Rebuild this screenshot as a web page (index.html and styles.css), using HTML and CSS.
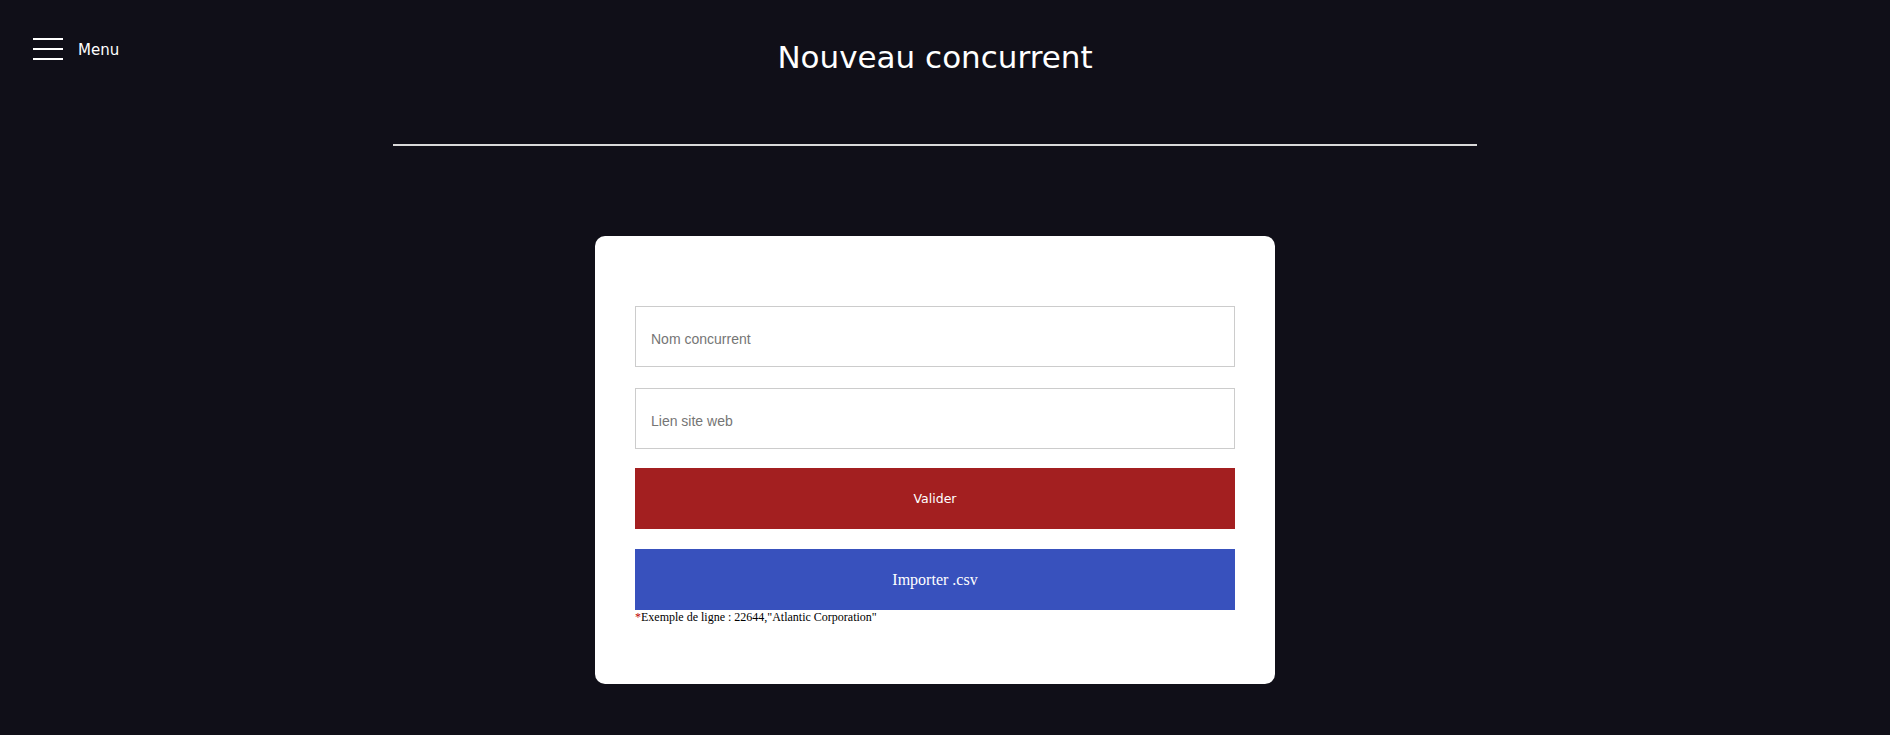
FILE: index.html
```html
<!DOCTYPE html>
<html lang="fr">
<head>
<meta charset="utf-8">
<title>Nouveau concurrent</title>
<link rel="stylesheet" href="styles.css">
</head>
<body>
<div class="page">
  <header class="topbar">
    <button class="menu-toggle" type="button">
      <span class="burger"><i></i><i></i><i></i></span>
      <span class="menu-label">Menu</span>
    </button>
    <h1 class="title">Nouveau concurrent</h1>
    <div class="spacer"></div>
  </header>
  <hr class="divider">
  <main class="card">
    <form class="form">
      <input class="field" type="text" placeholder="Nom concurrent">
      <input class="field" type="text" placeholder="Lien site web">
      <button class="btn btn-valider" type="button">Valider</button>
      <div class="import">
        <button class="btn btn-import" type="button">Importer .csv</button>
        <p class="hint"><span class="star">*</span>Exemple de ligne : 22644,"Atlantic Corporation"</p>
      </div>
    </form>
  </main>
</div>
</body>
</html>
```
FILE: styles.css
```css
html, body {
  margin: 0;
  padding: 0;
  background: #100f18;
}

.page {
  width: 1870px;
  min-height: 735px;
  display: flex;
  flex-direction: column;
  align-items: center;
}

.topbar {
  width: 100%;
  display: grid;
  grid-template-columns: 1fr auto 1fr;
  align-items: start;
}

.menu-toggle {
  justify-self: start;
  margin: 38px 0 0 33px;
  padding: 0;
  border: 0;
  background: transparent;
  display: flex;
  align-items: flex-start;
  gap: 15px;
  cursor: pointer;
  color: #ffffff;
}

.burger {
  display: flex;
  flex-direction: column;
  gap: 8px;
  width: 30px;
}

.burger i {
  display: block;
  height: 2px;
  background: #ffffff;
}

.menu-label {
  margin-top: 3px;
  font-family: "DejaVu Sans", sans-serif;
  font-size: 15px;
  line-height: 18px;
  font-weight: normal;
  color: #ffffff;
}

.title {
  margin: 40px 0 0;
  font-family: "DejaVu Sans", sans-serif;
  font-size: 31px;
  line-height: 35px;
  font-weight: normal;
  color: #ffffff;
}

.divider {
  width: 58%;
  height: 2px;
  margin: 69px 0 0;
  border: 0;
  background: #d9d9d9;
}

.card {
  margin-top: 90px;
  width: 600px;
  padding: 70px 40px 60px 40px;
  background: #ffffff;
  border-radius: 10px;
}

.form {
  display: flex;
  flex-direction: column;
  gap: 20px;
}

.field {
  box-sizing: border-box;
  height: 61px;
  width: 100%;
  margin: 0;
  padding: 4px 15px 0;
  border: 1px solid #cccccc;
  font-family: "Liberation Sans", Arial, sans-serif;
  font-size: 14px;
  color: #333333;
  background: #ffffff;
  outline: none;
}

.field + .field {
  margin-top: 1px;
}

.field::placeholder {
  color: #757575;
}

.btn {
  display: block;
  width: 100%;
  height: 61px;
  margin: 0;
  border: 0;
  color: #ffffff;
  cursor: pointer;
}

.btn-valider {
  margin-top: -1px;
  background: #a31f20;
  font-family: "DejaVu Sans", sans-serif;
  font-size: 12.5px;
}

.btn-import {
  background: #3851bd;
  font-family: "Liberation Serif", "Times New Roman", serif;
  font-size: 16px;
}

.hint {
  margin: 0;
  font-family: "Liberation Serif", "Times New Roman", serif;
  font-size: 12px;
  line-height: 14px;
  color: #000000;
}

.star {
  color: #c00000;
}
```
